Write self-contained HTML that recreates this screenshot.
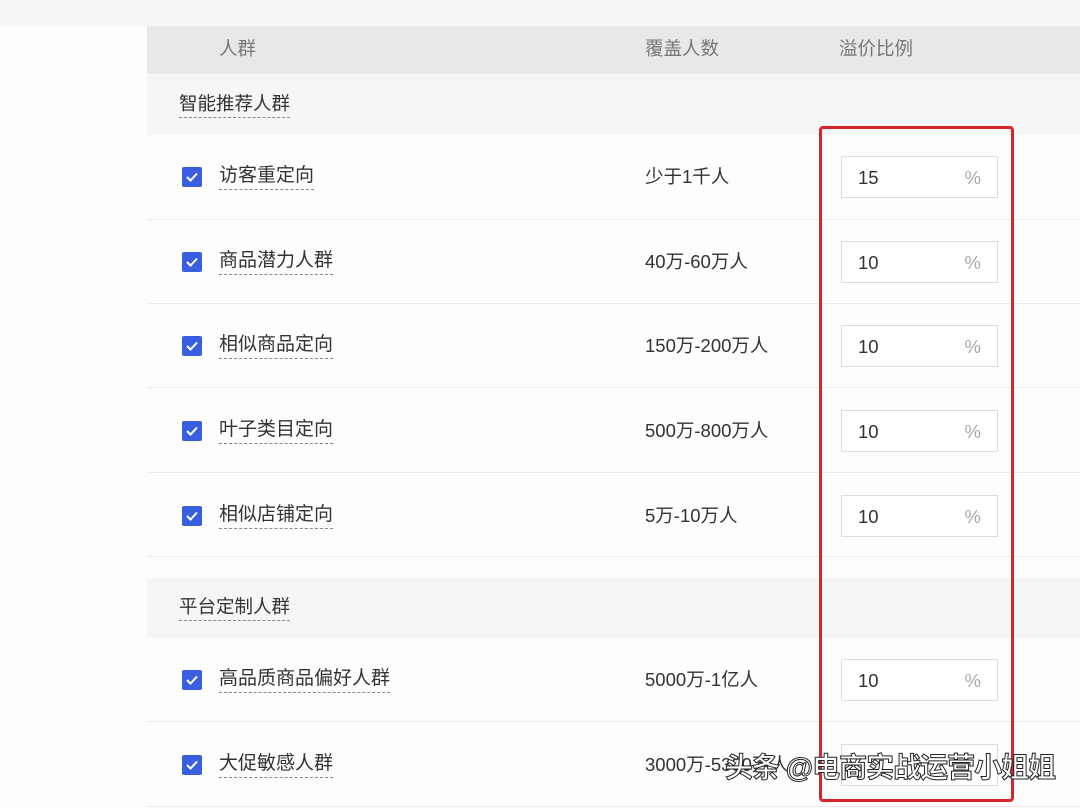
<!DOCTYPE html>
<html><head><meta charset="utf-8"><style>
*{margin:0;padding:0;box-sizing:border-box}
body{width:1080px;height:808px;overflow:hidden;background:#fdfdfd;font-family:"Liberation Sans","Noto Sans CJK SC",sans-serif;position:relative;color:#333}
.a{position:absolute}
.hdr{left:147px;top:26px;width:933px;height:48px;background:#e8e8ea;font-size:18.5px;color:#777}
.sec{left:147px;width:933px;height:60px;background:#f6f6f7}
.sec span{position:absolute;left:32px;top:18px;font-size:18.5px;color:#333;border-bottom:1.5px dashed #888;line-height:22px;padding-bottom:2px}
.sep{left:147px;width:933px;height:1px;background:#ececec}
.cb{left:182px;width:20px;height:20px;background:#3a5ee0;border-radius:2px}
.cb svg{position:absolute;left:3px;top:4px}
.nm{left:219px;font-size:19px;line-height:22px;border-bottom:1.5px dashed #888;padding-bottom:2px;color:#333}
.cv{left:645px;font-size:18.5px;line-height:22px;color:#333}
.in{left:841px;width:157px;height:42px;border:1px solid #ddd;background:#fff;font-size:18.5px}
.in b{font-weight:normal;position:absolute;left:16px;top:10px;color:#333}
.in i{font-style:normal;position:absolute;right:16px;top:10px;color:#aaa}
</style></head><body>
<div class="a" style="left:0;top:0;width:1080px;height:26px;background:#f7f7f8"></div>
<div class="a hdr"><span class="a" style="left:72px;top:9px">人群</span><span class="a" style="left:498px;top:9px">覆盖人数</span><span class="a" style="left:692px;top:9px">溢价比例</span></div>
<div class="a sec" style="top:75px"><span>智能推荐人群</span></div>
<div class="a sec" style="top:578px"><span>平台定制人群</span></div>

<div class="a cb" style="top:167px"><svg width="14" height="12"><path d="M2 6l3.5 3.5L12 2.5" stroke="#fff" stroke-width="2" fill="none"/></svg></div>
<div class="a nm" style="top:165px">访客重定向</div><div class="a cv" style="top:166px">少于1千人</div>
<div class="a in" style="top:156px"><b>15</b><i>%</i></div>
<div class="a sep" style="top:219px"></div>

<div class="a cb" style="top:252px"><svg width="14" height="12"><path d="M2 6l3.5 3.5L12 2.5" stroke="#fff" stroke-width="2" fill="none"/></svg></div>
<div class="a nm" style="top:250px">商品潜力人群</div><div class="a cv" style="top:251px">40万-60万人</div>
<div class="a in" style="top:241px"><b>10</b><i>%</i></div>
<div class="a sep" style="top:303px"></div>

<div class="a cb" style="top:336px"><svg width="14" height="12"><path d="M2 6l3.5 3.5L12 2.5" stroke="#fff" stroke-width="2" fill="none"/></svg></div>
<div class="a nm" style="top:334px">相似商品定向</div><div class="a cv" style="top:335px">150万-200万人</div>
<div class="a in" style="top:325px"><b>10</b><i>%</i></div>
<div class="a sep" style="top:387px"></div>

<div class="a cb" style="top:421px"><svg width="14" height="12"><path d="M2 6l3.5 3.5L12 2.5" stroke="#fff" stroke-width="2" fill="none"/></svg></div>
<div class="a nm" style="top:419px">叶子类目定向</div><div class="a cv" style="top:420px">500万-800万人</div>
<div class="a in" style="top:410px"><b>10</b><i>%</i></div>
<div class="a sep" style="top:472px"></div>

<div class="a cb" style="top:506px"><svg width="14" height="12"><path d="M2 6l3.5 3.5L12 2.5" stroke="#fff" stroke-width="2" fill="none"/></svg></div>
<div class="a nm" style="top:504px">相似店铺定向</div><div class="a cv" style="top:505px">5万-10万人</div>
<div class="a in" style="top:495px"><b>10</b><i>%</i></div>
<div class="a sep" style="top:556px"></div>

<div class="a cb" style="top:670px"><svg width="14" height="12"><path d="M2 6l3.5 3.5L12 2.5" stroke="#fff" stroke-width="2" fill="none"/></svg></div>
<div class="a nm" style="top:668px">高品质商品偏好人群</div><div class="a cv" style="top:669px">5000万-1亿人</div>
<div class="a in" style="top:659px"><b>10</b><i>%</i></div>
<div class="a sep" style="top:721px"></div>

<div class="a cb" style="top:755px"><svg width="14" height="12"><path d="M2 6l3.5 3.5L12 2.5" stroke="#fff" stroke-width="2" fill="none"/></svg></div>
<div class="a nm" style="top:753px">大促敏感人群</div><div class="a cv" style="top:754px">3000万-5300万人</div>
<div class="a in" style="top:744px"></div>
<div class="a sep" style="top:806px"></div>

<div class="a" style="left:819px;top:126px;width:195px;height:676px;border:3px solid #d8252a;border-radius:4px"></div>
<div class="a" style="left:725px;top:750px;font-size:28px;line-height:36px;color:#fff;-webkit-text-stroke:1px #222;font-weight:bold;letter-spacing:-1px">头条 @电商实战运营小姐姐</div>
</body></html>
